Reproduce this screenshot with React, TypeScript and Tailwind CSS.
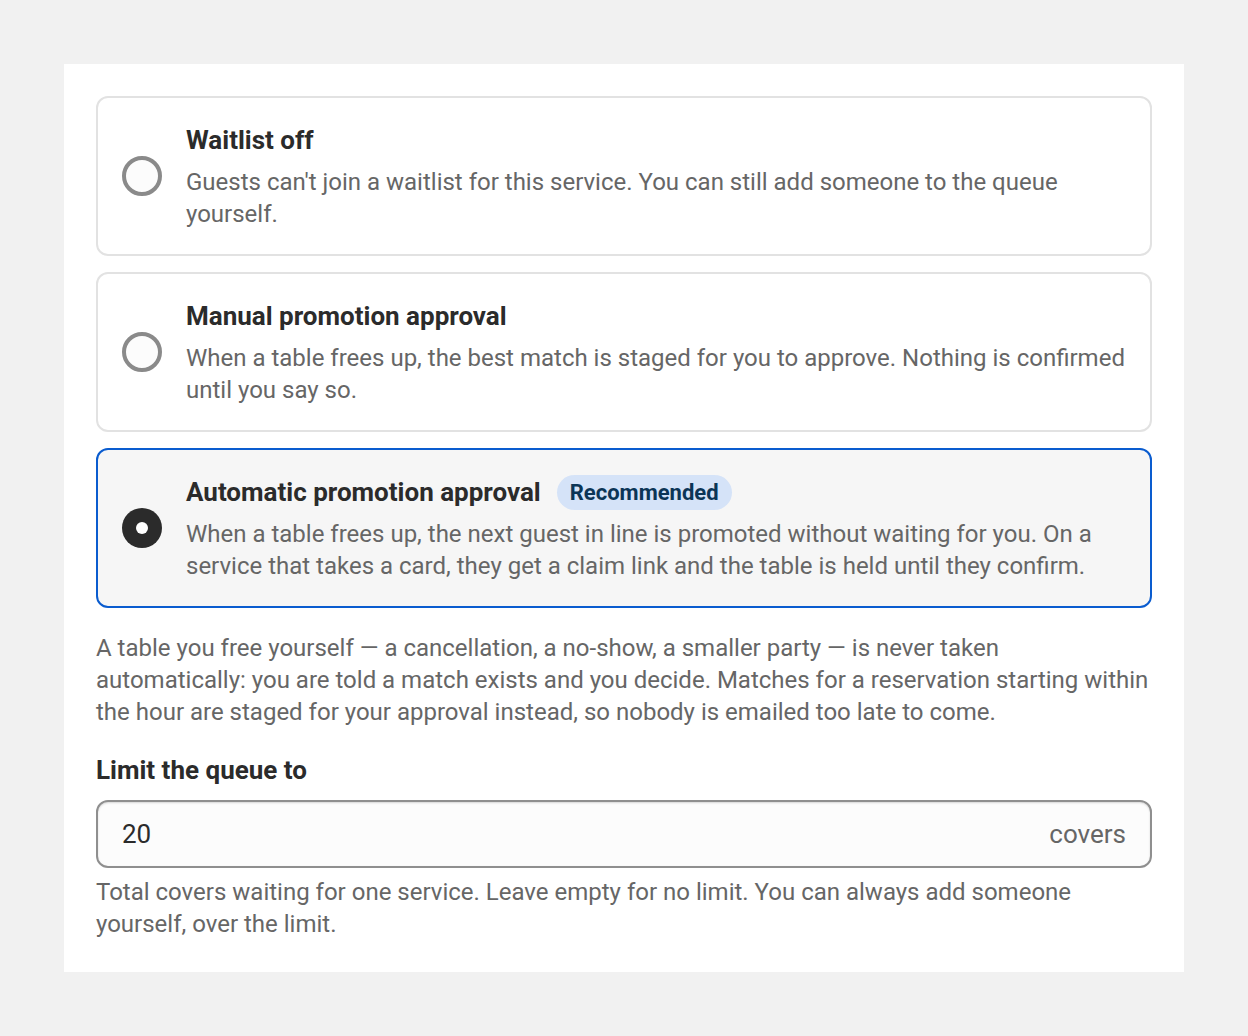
import React from 'react';

type Option = {
  id: string;
  title: string;
  desc: string;
  badge?: string;
};

const options: Option[] = [
  {
    id: 'off',
    title: 'Waitlist off',
    desc: "Guests can't join a waitlist for this service. You can still add someone to the queue yourself.",
  },
  {
    id: 'manual',
    title: 'Manual promotion approval',
    desc: 'When a table frees up, the best match is staged for you to approve. Nothing is confirmed until you say so.',
  },
  {
    id: 'auto',
    title: 'Automatic promotion approval',
    badge: 'Recommended',
    desc: 'When a table frees up, the next guest in line is promoted without waiting for you. On a service that takes a card, they get a claim link and the table is held until they confirm.',
  },
];

const Radio = ({ checked }: { checked: boolean }) =>
  checked ? (
    <div className="w-10 h-10 shrink-0 rounded-full bg-[#2b2b2b] flex items-center justify-center">
      <div className="w-3 h-3 rounded-full bg-white" />
    </div>
  ) : (
    <div className="w-10 h-10 shrink-0 rounded-full border-4 border-[#8a8a8a] bg-[#fcfcfc]" />
  );

export default function App() {
  const [selected, setSelected] = React.useState('auto');
  const [limit, setLimit] = React.useState('20');

  return (
    <div className="min-h-screen bg-[#f1f1f1] p-16 font-['Roboto',sans-serif]">
      <div className="bg-white p-8 flex flex-col">
        {/* Mode options */}
        <div className="flex flex-col gap-4">
          {options.map((o) => {
            const active = selected === o.id;
            return (
              <label
                key={o.id}
                onClick={() => setSelected(o.id)}
                className={`flex items-center gap-6 rounded-xl border-2 p-6 cursor-pointer ${
                  active ? 'border-[#0a5ccf] bg-[#f6f6f6]' : 'border-[#e2e2e2] bg-white'
                }`}
              >
                <Radio checked={active} />
                <div className="flex flex-col gap-2">
                  <div className="flex items-center gap-4">
                    <span className="text-[26px] leading-9 font-bold text-[#2b2b2b]">{o.title}</span>
                    {o.badge && (
                      <span className="rounded-full bg-[#d5e3f8] px-[13px] text-[22px] leading-[35px] font-bold text-[#0b3556]">
                        {o.badge}
                      </span>
                    )}
                  </div>
                  <p className="text-[24px] leading-8 text-[#666666]">{o.desc}</p>
                </div>
              </label>
            );
          })}
        </div>

        <p className="mt-6 text-[24px] leading-8 text-[#666666]">
          A table you free yourself — a cancellation, a no-show, a smaller party — is never taken automatically: you are
          told a match exists and you decide. Matches for a reservation starting within the hour are staged for your
          approval instead, so nobody is emailed too late to come.
        </p>

        {/* Queue limit */}
        <label className="mt-6 text-[26px] leading-9 font-bold text-[#2b2b2b]">Limit the queue to</label>
        <div className="mt-3 flex items-center h-[68px] rounded-xl border-2 border-[#8f8f8f] bg-[#fcfcfc] px-6 shadow-[inset_0_1px_2px_rgba(0,0,0,0.15)]">
          <input
            value={limit}
            onChange={(e) => setLimit(e.target.value)}
            className="flex-1 bg-transparent outline-none text-[26px] text-[#2b2b2b]"
          />
          <span className="text-[26px] text-[#666666]">covers</span>
        </div>
        <p className="mt-2 text-[24px] leading-8 text-[#666666]">
          Total covers waiting for one service. Leave empty for no limit. You can always add someone yourself, over the
          limit.
        </p>
      </div>
    </div>
  );
}
